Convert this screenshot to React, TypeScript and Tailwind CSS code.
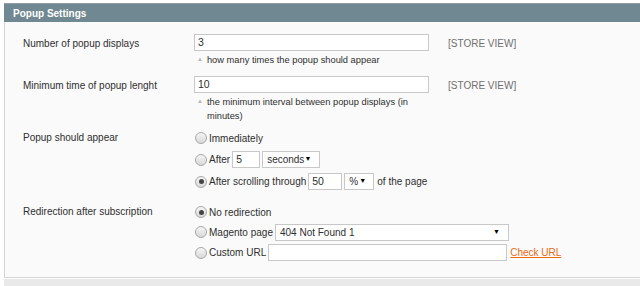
const font = { fontFamily: '"Liberation Sans", Arial, sans-serif' }

function Radio({ checked = false }: { checked?: boolean }) {
  return (
    <span className="flex h-[12px] w-[12px] shrink-0 items-center justify-center rounded-full border border-[#a8a8a8] bg-gradient-to-b from-[#f6f6f6] to-[#d8d8d8]">
      {checked && <span className="h-[5px] w-[5px] rounded-full bg-[#444]" />}
    </span>
  )
}

function Hint({ children }: { children: React.ReactNode }) {
  return (
    <div className="mt-[2px] flex w-[240px] gap-[4px] pl-[3px] text-[9.3px] leading-[14px] text-[#2f2f2f]">
      <span className="text-[6px] leading-[13px] text-[#b5b5b5]">▲</span>
      <span>{children}</span>
    </div>
  )
}

function Select({ label, width, pr = 'pr-[6px]' }: { label: string; width: string; pr?: string }) {
  return (
    <div className={`flex h-[17px] items-center justify-between border border-[#c8c8c8] bg-white pl-[4px] ${pr} ${width}`}>
      <span>{label}</span>
      <span className="text-[7px] text-black">▼</span>
    </div>
  )
}

export default function App() {
  return (
    <div className="h-[286px] w-[640px] overflow-hidden bg-white pl-[4px] pt-[3px] text-[10px] text-[#2f2f2f]" style={font}>
      <div className="flex h-[19px] items-center border-t border-[#8ea0a6] bg-[#6f8891] pl-[9px] text-[10px] font-bold text-white">
        Popup Settings
      </div>
      <div className="h-[256px] border-b border-l border-[#d4d4d4] bg-[#fafafa] pl-[18px] pt-[12px]">
        {/* Number of popup displays */}
        <div className="flex">
          <div className="w-[171px] pt-[2px]">Number of popup displays</div>
          <div className="w-[254px]">
            <div className="h-[17px] w-[235px] border border-[#c8c8c8] bg-white pl-[3px] text-[10.5px] leading-[15px]">3</div>
            <Hint>how many times the popup should appear</Hint>
          </div>
          <div className="pt-[2px] text-[#707070]">[STORE VIEW]</div>
        </div>

        {/* Minimum time */}
        <div className="mt-[9px] flex">
          <div className="w-[171px] pt-[2px]">Minimum time of popup lenght</div>
          <div className="w-[254px]">
            <div className="h-[17px] w-[235px] border border-[#c8c8c8] bg-white pl-[3px] text-[10.5px] leading-[15px]">10</div>
            <Hint>the minimum interval between popup displays (in minutes)</Hint>
          </div>
          <div className="pt-[2px] text-[#707070]">[STORE VIEW]</div>
        </div>

        {/* Popup should appear */}
        <div className="mt-[7px] flex">
          <div className="w-[172px]">Popup should appear</div>
          <div className="flex flex-col gap-[5px]">
            <div className="flex h-[16px] items-center gap-[2px]">
              <Radio />
              <span>Immediately</span>
            </div>
            <div className="flex h-[17px] items-center gap-[2px]">
              <Radio />
              <span>After</span>
              <div className="h-[17px] w-[28px] border border-[#c8c8c8] bg-white pl-[3px] text-[10.5px] leading-[15px]">5</div>
              <Select label="seconds" width="w-[58px]" pr="pr-[8px]" />
            </div>
            <div className="flex h-[17px] items-center gap-[2px]">
              <Radio checked />
              <span>After scrolling through</span>
              <div className="h-[17px] w-[34px] border border-[#c8c8c8] bg-white pl-[3px] text-[10.5px] leading-[15px]">50</div>
              <Select label="%" width="w-[30px]" pr="pr-[7px]" />
              <span className="ml-[1px]">of the page</span>
            </div>
          </div>
        </div>

        {/* Redirection */}
        <div className="mt-[14px] flex">
          <div className="w-[172px]">Redirection after subscription</div>
          <div className="flex flex-col gap-[4px]">
            <div className="flex h-[16px] items-center gap-[2px]">
              <Radio checked />
              <span>No redirection</span>
            </div>
            <div className="flex h-[16px] items-center gap-[2px]">
              <Radio />
              <span>Magento page</span>
              <Select label="404 Not Found 1" width="w-[234px]" pr="pr-[8px]" />
            </div>
            <div className="flex h-[17px] items-center gap-[2px]">
              <Radio />
              <span>Custom URL</span>
              <div className="h-[17px] w-[239px] border border-[#c8c8c8] bg-white" />
              <a className="ml-[1px] text-[#eb6a12] underline">Check URL</a>
            </div>
          </div>
        </div>
      </div>
      <div className="mt-[1px] h-[8px] bg-[#e9e9e9]" />
    </div>
  )
}
